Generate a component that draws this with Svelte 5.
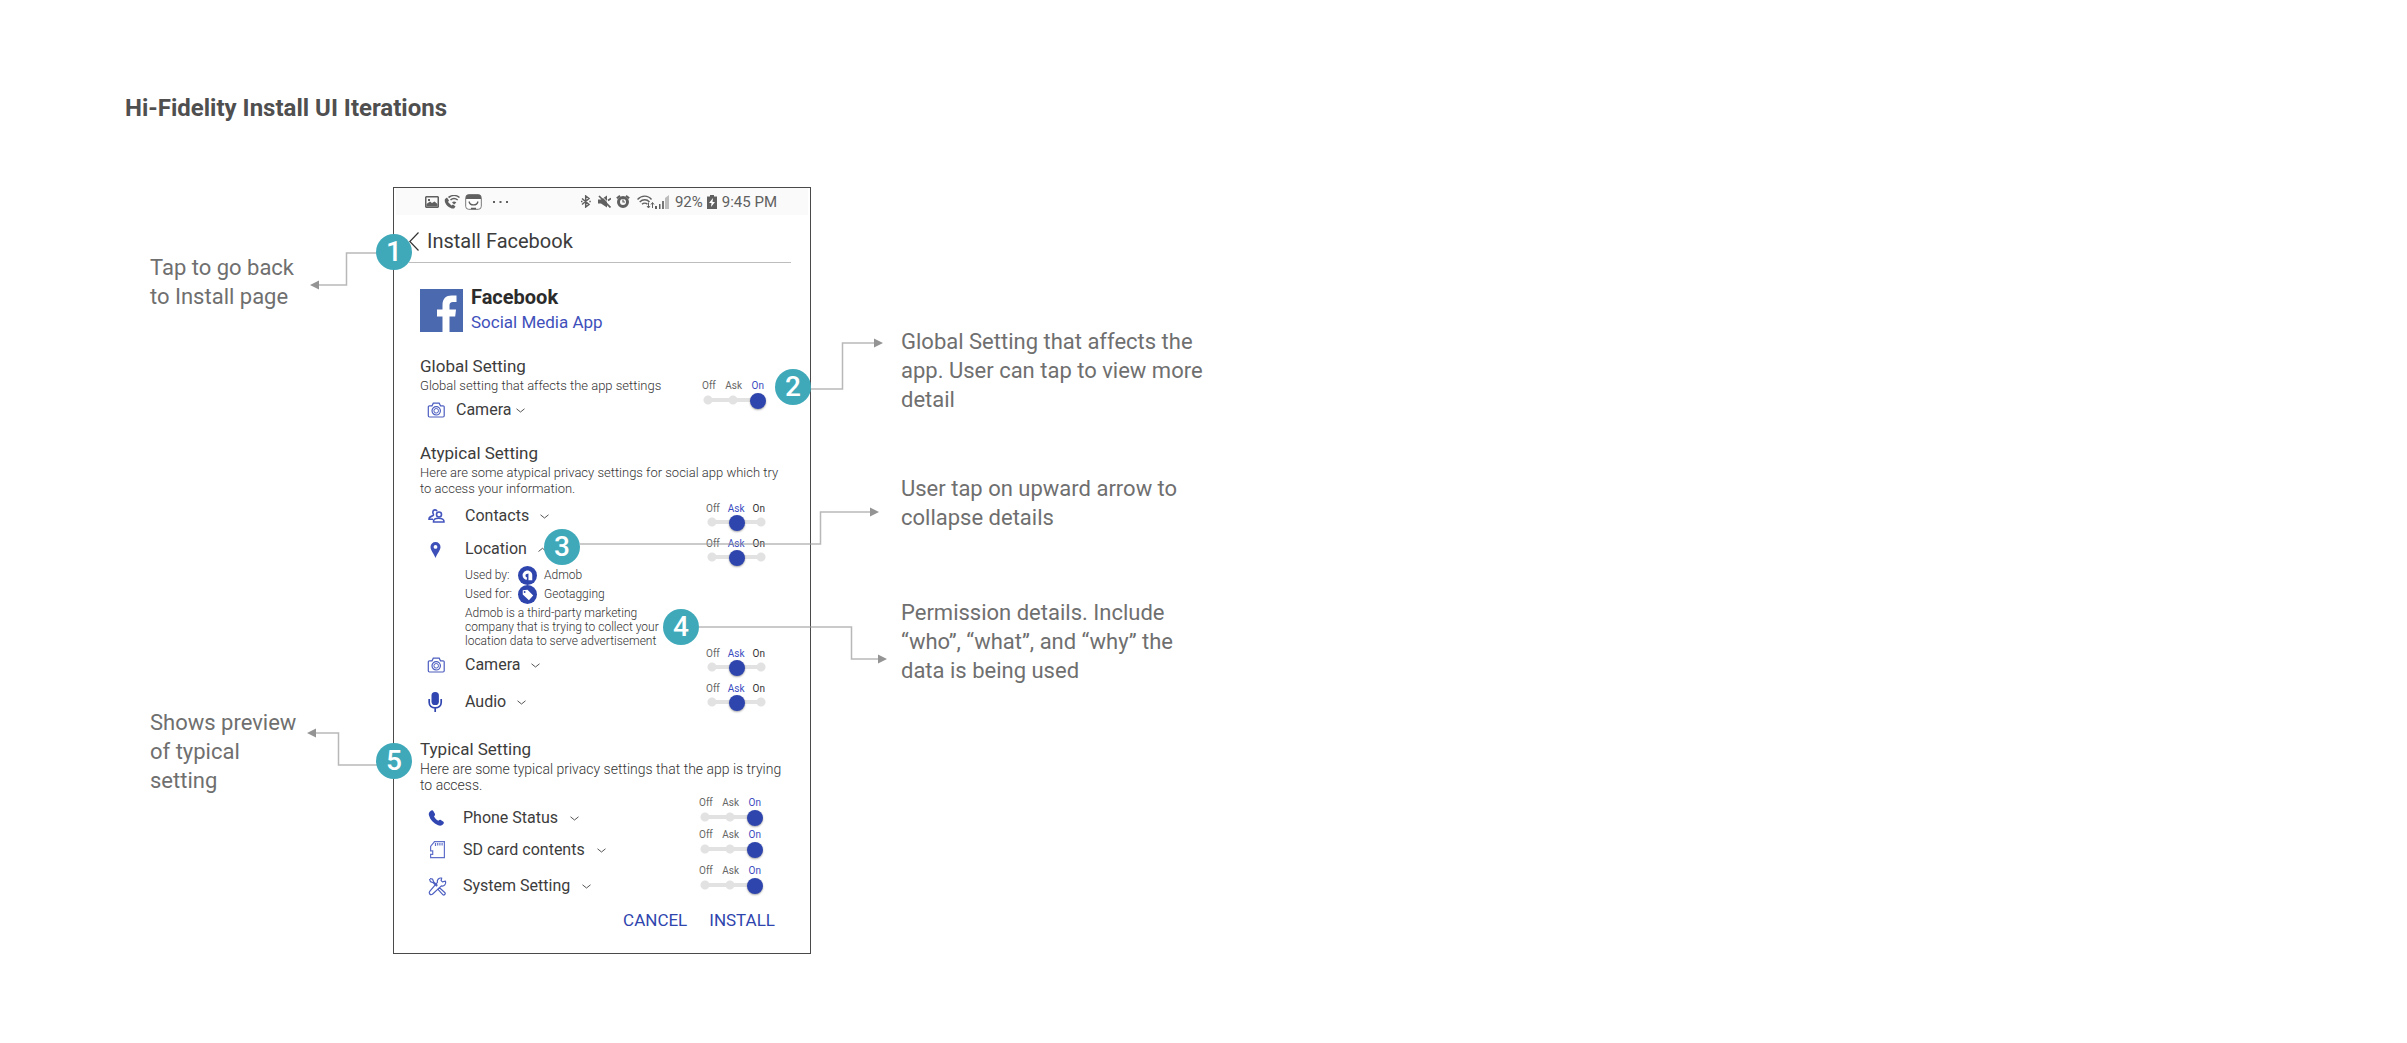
<script>
  let globalRow = { label: 'Camera', icon: 'camera' };
  let globalLevel = $state(2);

  const atypical = [
    { label: 'Contacts', icon: 'contacts' },
    { label: 'Location', icon: 'pin', open: true },
    { label: 'Camera', icon: 'camera' },
    { label: 'Audio', icon: 'mic' }
  ];
  let atypicalLevels = $state([1, 1, 1, 1]);

  const typical = [
    { label: 'Phone Status', icon: 'phone' },
    { label: 'SD card contents', icon: 'sd' },
    { label: 'System Setting', icon: 'tools' }
  ];
  let typicalLevels = $state([2, 2, 2]);

  const names = ['Off', 'Ask', 'On'];

  const leftNotes = ['Tap to go back\nto Install page', 'Shows preview\nof typical\nsetting'];
  const rightNotes = [
    'Global Setting that affects the\napp. User can tap to view more\ndetail',
    'User tap on upward arrow to\ncollapse details',
    'Permission details. Include\n“who”, “what”, and “why” the\ndata is being used'
  ];
</script>

{#snippet icon(name)}
  <svg class="icon" viewBox="0 0 20 20" aria-hidden="true">
    {#if name === 'camera'}
      <g fill="none" stroke="#4c5dc0" stroke-width="1.200">
        <path d="M2.500 5.800H5l1.300-2.600h5.900l1.300 2.600H16a1.200 1.200 0 0 1 1.200 1.200v8.800A1.200 1.200 0 0 1 16 17H2.500a1.200 1.200 0 0 1-1.200-1.200V7a1.200 1.200 0 0 1 1.200-1.200z" />
        <circle cx="9.200" cy="10.800" r="4.200" />
        <circle cx="9.200" cy="10.800" r="2.300" stroke-width="1" />
      </g>
    {:else if name === 'contacts'}
      <g fill="none" stroke="#4456be" stroke-width="1.600">
        <circle cx="12" cy="8.500" r="2.500" />
        <path d="M6.500 16c-.3-2.600 1.700-3.700 5-3.700s5.800 1.100 5.500 3.700z" />
        <path d="M10 5.200C9.300 3.300 6 3.300 5.800 6c0 1.600 1 2.200.6 3.200-.6 1.300-4.400.6-4.400 4h4" />
      </g>
    {:else if name === 'pin'}
      <path fill="#3d4fb8" fill-rule="evenodd" d="M8.500 3a5 5 0 0 0-5 5c0 3.600 3.500 6.500 5 11 1.500-4.500 5-7.400 5-11a5 5 0 0 0-5-5zm0 3a1.900 1.900 0 1 1 0 3.800 1.900 1.900 0 0 1 0-3.800z" />
    {:else if name === 'mic'}
      <rect x="4.500" y="0" width="7.400" height="13" rx="3.600" fill="#3146b0" />
      <path d="M2.200 7v3.500c0 3 2.400 5.300 6 5.300s6-2.300 6-5.300V7M8.200 15.500V20" fill="none" stroke="#3146b0" stroke-width="1.700" />
    {:else if name === 'phone'}
      <path fill="#3146b0" d="M3.500 3c1.300-1 2.400-.8 3.100.4l1.300 2.300c.5 1 .1 1.700-.9 2.500 1 2.100 2.400 3.500 4.300 4.500 1-1 1.700-1.300 2.500-.8l2.300 1.500c1 .8 1 1.700 0 2.800-1.200 1.400-2.800 1.900-5 1C6.500 15.400 3.300 12 2 7.500 1.400 5.600 2 4.200 3.500 3z" />
    {:else if name === 'sd'}
      <g fill="none" stroke="#6171ca" stroke-width="1.200">
        <path d="M7.500 1.600h9.900v16H3.600v-3.200h2.100v-3.500H3.600V6.500z" />
        <path d="M8.500 3v3M10.700 3v2.500M12.900 3v2.500M15.100 3v2.500" />
      </g>
    {:else}
      <g fill="none" stroke="#4e60c2" stroke-width="1.200" stroke-linejoin="round">
        <path d="M3 2.500l2.500.6 1.200 2.800 3.800 3.600M2.500 3l.9 2.600 2.800 1.200 3.600 3.600" />
        <path d="M12.500 11.800l5.500 5c.8 1-.9 2.800-2 2l-5-5.400z" />
        <path d="M17.800 5.200l-2.300.7-1.400-1.300.6-2.500c-2.600-.6-5 1.600-4.300 4.200L2.700 15.400c-1.400 2 .6 4 2.700 2.900l9-8.400c2.800.7 5-2 4.100-4.700z" />
      </g>
    {/if}
  </svg>
{/snippet}

{#snippet permission(row)}
  <button class="permission" aria-expanded={!!row.open}>
    {@render icon(row.icon)}
    <span>{row.label}</span>
    <svg class="chevron" viewBox="0 0 9 5" aria-hidden="true">
      <path d={row.open ? 'M.5 4.500l4-3.200 4 3.200' : 'M.5 .8l4 3.200 4-3.200'} />
    </svg>
  </button>
{/snippet}

{#snippet levelLabels(value)}
  <span class="levels" class:middle={value === 1} aria-hidden="true">
    {#each names as name, i}
      <span class:chosen={value === i}>{name}</span>
    {/each}
  </span>
{/snippet}

<main>
  <h1>Hi-Fidelity Install UI Iterations</h1>

  <div class="board">
    <div class="notes left">
      {#each leftNotes as note}<p>{note}</p>{/each}
    </div>

    <section class="phone">
      <div class="status">
        <svg class="st" width="14" height="12" viewBox="0 0 14 12"><path fill="#606060" fill-rule="evenodd" d="M1 0h12l1 1v10l-1 1H1l-1-1V1zM1.500 1.500v9h11v-9z" /><path fill="#606060" d="M1.500 10.500V8L5 5.500l2 1.500 2.500-1.500 3 2.500v2.500zM3 3h2v2H3z" /></svg>
        <svg class="st" width="16" height="14" viewBox="0 0 16 14"><path fill="#606060" d="M1 4l2-1.500 2 3L4 7l3.500 3.500L9 9.500l2.500 2L10 13.500C5 14-.5 8 1 4z" /><path fill="none" stroke="#606060" stroke-width="1.600" d="M4.500 2.500C8-.2 12.500 0 15.500 2.500M6.500 5c2-1.800 5-1.800 7.200 0" /><path fill="#606060" d="M8 7.500c1.200-1.200 3-1.200 4.300 0L10.200 9.500z" /></svg>
        <svg class="st" width="17" height="16" viewBox="0 0 17 16"><rect x=".7" y=".7" width="15.600" height="14.600" rx="3" fill="#fff" stroke="#777" /><path fill="#606060" d="M1 5V3a2.500 2.500 0 0 1 2.500-2.500h10A2.500 2.500 0 0 1 16 3v2z" /><path fill="none" stroke="#606060" stroke-width="1.300" d="M4 7.500c1 4.500 8 4.500 9 0M6 14.500h5" /></svg>
        <svg class="st dots" width="15" height="4" viewBox="0 0 15 4"><path fill="#606060" d="M0 1h2v2H0zM6.500 1h2v2h-2zM13 1h2v2h-2z" /></svg>
        <span class="fill"></span>
        <svg class="st bluetooth" width="10" height="13" viewBox="0 0 10 13"><path fill="none" stroke="#606060" stroke-width="1.500" d="M1 3.500l7 6L4.700 12V1L8 3.500l-7 6M0 6.500h1.500M8.300 6.500h1.500" /></svg>
        <svg class="st" width="13" height="13" viewBox="0 0 13 13"><path fill="#606060" d="M0 4.500h3l6-4v12l-6-4H0z" /><path stroke="#fafafa" d="M2.500 0L13 10.500" /><path stroke="#606060" stroke-width="1.700" d="M1 1l11.500 11.500M10 5.500l3-2" /></svg>
        <svg class="st" width="14" height="13" viewBox="0 0 14 13"><path stroke="#606060" stroke-width="2" d="M.8 3.200L4 .8M13.200 3.200L10 .8" /><circle cx="7" cy="7" r="4.500" fill="#fafafa" stroke="#606060" stroke-width="3" /><path fill="none" stroke="#606060" stroke-width="1.200" d="M7 4.500V7h2" /></svg>
        <svg class="st wifi" width="18" height="14" viewBox="0 0 18 14"><path fill="none" stroke="#606060" stroke-width="1.400" d="M.5 4.500c4-4.500 10.500-4.500 14 0M2.700 7c3-3 7.200-3 9.800 0M5 9.300c1.500-1.500 4-1.500 5.500 0" /><path stroke="#606060" d="M11.500 7.500v5M10 11l1.500 2 1.500-2M15.500 13V8M14 9.500l1.500-2 1.500 2" fill="none" /></svg>
        <svg class="st signal" width="15" height="14" viewBox="0 0 15 14"><path fill="#606060" d="M0 11h2v3H0zM4 9h1.500v5H4z" /><path fill="#777" d="M7 6h2v8H7z" /><path fill="#bdbdbd" d="M10 3l4-3v14h-4z" /></svg>
        <span class="pct">92%</span>
        <svg class="st" width="10" height="14" viewBox="0 0 10 14"><path fill="#606060" d="M3 0h4v1.500h3V14H0V1.500h3z" /><path fill="#fff" d="M6 3L2 8h2.500L4 12l4-5H5.500z" /></svg>
        <span class="time">9:45 PM</span>
      </div>

      <header>
        <button class="back" aria-label="Back">
          <svg viewBox="0 0 10 19"><path d="M9.500.5L.8 9.500l8.700 9" /></svg>
        </button>
        <h2>Install Facebook</h2>
      </header>

      <div class="app">
        <svg class="logo" viewBox="0 0 43 43" role="img" aria-label="Facebook logo">
          <rect width="43" height="43" fill="#4a69af" />
          <path fill="#fff" d="M22.500 43V27.500H17V20.500h5.500V16c0-6.500 3.500-9.500 9-9.500h5v6.500h-3.500c-2.600 0-3.500 1.200-3.500 3.500v4H36l-.8 7h-5.700V43z" />
        </svg>
        <div>
          <strong>Facebook</strong>
          <a href="#category">Social Media App</a>
        </div>
      </div>

      <section class="group global">
        <div>
          <h3>Global Setting</h3>
          <p class="desc">Global setting that affects the app settings</p>
          {@render permission(globalRow)}
        </div>
        <label class="slider">
          {@render levelLabels(globalLevel)}
          <input type="range" min="0" max="2" aria-label="Global setting level" bind:value={globalLevel} />
        </label>
      </section>

      <section class="group atypical">
        <h3>Atypical Setting</h3>
        <p class="desc">Here are some atypical privacy settings for social app which try to access your information.</p>
        <div class="controls">
          <div class="list">
            {#each atypical as row}
              {@render permission(row)}
              {#if row.open}
                <div class="details">
                  <div class="use">
                    <span>Used by:</span>
                    <svg viewBox="0 0 20 20" aria-hidden="true"><circle cx="10" cy="10" r="10" fill="#2f45ae" /><path fill="#fff" d="M15 15V9.500C15 7 12.700 4.700 10 4.700S4.800 7 4.800 9.800c0 2.400 1.800 4.500 4.200 4.900l.6-2.600c-1.200-.4-1.700-1.200-1.700-2.200 0-.5.2-1 .5-1.300L11 7.800V15z" /></svg>
                    <span>Admob</span>
                  </div>
                  <div class="use">
                    <span>Used for:</span>
                    <svg viewBox="0 0 20 20" aria-hidden="true"><circle cx="10" cy="10" r="10" fill="#2f45ae" /><path fill="#fff" fill-rule="evenodd" d="M5 5.500L10 5l6 6-4.500 5L5 10zm2 .8a1 1 0 1 0 0 2 1 1 0 0 0 0-2z" /></svg>
                    <span>Geotagging</span>
                  </div>
                  <p>Admob is a third-party marketing company that is trying to collect your location data to serve advertisement</p>
                </div>
              {/if}
            {/each}
          </div>
          <div class="sliders">
            {#each atypical as row, i}
              <label class="slider">
                {@render levelLabels(atypicalLevels[i])}
                <input type="range" min="0" max="2" aria-label={row.label} bind:value={atypicalLevels[i]} />
              </label>
            {/each}
          </div>
        </div>
      </section>

      <section class="group typical">
        <h3>Typical Setting</h3>
        <p class="desc">Here are some typical privacy settings that the app is trying to access.</p>
        <div class="controls">
          <div class="list">
            {#each typical as row}{@render permission(row)}{/each}
          </div>
          <div class="sliders">
            {#each typical as row, i}
              <label class="slider">
                {@render levelLabels(typicalLevels[i])}
                <input type="range" min="0" max="2" aria-label={row.label} bind:value={typicalLevels[i]} />
              </label>
            {/each}
          </div>
        </div>
      </section>

      <footer>
        <button>CANCEL</button>
        <button>INSTALL</button>
      </footer>
    </section>

    <div class="notes right">
      {#each rightNotes as note}<p>{note}</p>{/each}
    </div>

    <svg class="wires" viewBox="0 0 900 767" aria-hidden="true">
      <g class="lines">
        <path d="M376 66H346.500V98H318" />
        <path d="M811 202H842.500V156H875" />
        <path d="M580 357H820.500V325H871" />
        <path d="M699 440H851.500V472H879" />
        <path d="M378 578H338.500V546H315" />
      </g>
      <path class="tips" d="M310 98l9-4.500v9zM883 156l-9-4.500v9zM879 325l-9-4.500v9zM887 472l-9-4.500v9zM307 546l9-4.500v9z" />
    </svg>
    <span class="badge one">1</span>
    <span class="badge two">2</span>
    <span class="badge three">3</span>
    <span class="badge four">4</span>
    <span class="badge five">5</span>
  </div>
</main>

<style>
  :global(body) {
    background: #fff;
    font-family: Roboto, 'Liberation Sans', sans-serif;
  }
  h1, h2, h3, p { margin: 0; }
  button {
    border: 0;
    padding: 0;
    background: none;
    font: inherit;
    color: inherit;
    cursor: pointer;
  }
  main { padding: 94px 0 89px; }
  h1 {
    padding-left: 125px;
    font-size: 24px;
    line-height: 28px;
    color: #4f4f4f;
  }
  .board {
    position: relative;
    display: grid;
    grid-template-columns: 393px 418px minmax(0, 1fr);
    margin-top: 65px;
  }
  .notes {
    display: flex;
    flex-direction: column;
    font-size: 22px;
    line-height: 29px;
    color: #6f6f6f;
  }
  .notes p { white-space: pre; }
  .left { padding: 66px 0 0 150px; gap: 397px; }
  .right { padding: 140px 0 0 90px; gap: 60px; }
  .right p:last-child { margin-top: 6px; }

  .phone {
    border: 1px solid #4a4a4a;
    color: #3c3c3c;
    font-size: 16px;
    line-height: 20px;
  }
  .status {
    display: flex;
    align-items: center;
    gap: 5px;
    height: 27px;
    margin: 0 2px;
    padding: 0 31px 0 29px;
    background: #fafafa;
    color: #606060;
    font-size: 15px;
  }
  .st { flex: none; }
  .dots { margin-left: 6px; }
  .bluetooth { margin-right: 2px; }
  .wifi { margin-left: 2px; }
  .signal { margin-left: -5px; }
  .pct { margin-right: -1px; }
  .fill { flex: 1; }
  header {
    display: flex;
    align-items: center;
    gap: 8px;
    margin: 0 19px 0 15px;
    padding: 14px 0 9px;
    border-bottom: 1px solid #bdbdbd;
  }
  .back { width: 10px; height: 24px; }
  .back svg { display: block; width: 10px; height: 19px; margin: auto; }
  .back path { fill: none; stroke: #333; stroke-width: 1.2; }
  h2 { font-size: 20px; line-height: 24px; font-weight: 400; }

  .app {
    display: flex;
    align-items: center;
    gap: 8px;
    margin: 22px 0 0 26px;
  }
  .logo { width: 43px; height: 43px; }
  .app div { display: flex; flex-direction: column; line-height: 25px; }
  .app strong { font-size: 20px; color: #2b2b2b; }
  .app a { font-size: 17px; color: #4050bb; text-decoration: none; }

  .group { padding-left: 26px; }
  h3 { font-size: 17px; line-height: 20px; font-weight: 400; }
  .desc {
    max-width: 370px;
    margin-top: 2px;
    font-size: 13px;
    line-height: 16px;
    font-weight: 300;
    color: #333;
  }
  .global {
    display: flex;
    justify-content: space-between;
    margin-top: 21px;
    padding-right: 44px;
  }
  .global .permission { margin-top: 6px; gap: 5px; }
  .global .icon { margin-right: 4px; }
  .global .slider { margin-top: 23px; }

  .permission {
    display: flex;
    align-items: center;
    gap: 12px;
    padding-left: 7px;
    line-height: 20px;
  }
  .icon { width: 20px; height: 20px; }
  .chevron { width: 9px; height: 5px; }
  .chevron path { fill: none; stroke: #555; }

  .controls { display: flex; justify-content: space-between; }
  .list, .sliders { display: flex; flex-direction: column; align-items: flex-start; }
  .atypical { margin-top: 23px; }
  .atypical .controls { padding-right: 40px; }
  .atypical .list { margin-top: 9px; gap: 13px; }
  .atypical .icon { margin-right: 6px; }
  .atypical .permission { gap: 11px; }
  .atypical .icon { margin-right: 7px; }
  .atypical .permission:last-child { margin-top: 4px; }
  .atypical .sliders { margin-top: 5px; gap: 6px; }
  .atypical .slider:nth-child(3) { margin-top: 75px; }

  .details {
    width: 200px;
    margin: -6px 0 -7px 45px;
    font-size: 12px;
    line-height: 14px;
    font-weight: 300;
    color: #333;
  }
  .use {
    display: grid;
    grid-template-columns: 46px 19px auto;
    align-items: center;
    column-gap: 7px;
    line-height: 19px;
    white-space: nowrap;
  }
  .use svg { width: 19px; height: 19px; }
  .details p { margin-top: 2px; }
  .details { padding-bottom: 1px; }

  .slider { display: block; width: 66px; }
  .levels {
    display: flex;
    justify-content: space-between;
    padding: 0 2px;
    font-size: 10px;
    line-height: 14px;
    color: #666;
  }
  .levels.middle { padding: 0 5px 0 2px; line-height: 13px; }
  .middle span:last-child { color: #333; }
  .levels .chosen { color: #3a4cc0; }
  input {
    appearance: none;
    display: block;
    width: 66px;
    height: 16px;
    margin: 0;
    background:
      radial-gradient(circle at 8px 7px, #e2e2e2 4px, transparent 5px),
      radial-gradient(circle at 33px 7px, #e2e2e2 4px, transparent 5px),
      radial-gradient(circle at 57px 7px, #e2e2e2 4px, transparent 5px),
      linear-gradient(#e2e2e2, #e2e2e2) 8px 5px / 50px 4px no-repeat;
    cursor: pointer;
  }
  input::-webkit-slider-thumb {
    appearance: none;
    width: 16px;
    height: 16px;
    border-radius: 50%;
    background: #2f45ae;
    box-shadow: 0 1px 2px rgba(0, 0, 0, 0.35);
  }

  .typical { margin-top: 27px; }
  .typical .desc { font-size: 14px; }
  .typical .controls { padding-right: 47px; }
  .typical .list { margin-top: 15px; gap: 12px; }
  .typical .icon { margin-right: 4px; }
  .typical .sliders { margin-top: 3px; gap: 2px; }
  .typical .permission:last-child, .typical .slider:last-child { margin-top: 4px; }

  footer {
    display: flex;
    justify-content: flex-end;
    gap: 22px;
    padding: 14px 35px 23px 0;
    font-size: 17px;
    color: #2f45ae;
  }

  .wires {
    position: absolute;
    left: 0;
    top: 0;
    width: 900px;
    height: 767px;
    pointer-events: none;
  }
  .lines { fill: none; stroke: #9a9a9a; stroke-opacity: 0.7; stroke-width: 1.5; }
  .tips { fill: #949494; }

  .badge {
    position: absolute;
    width: 36px;
    height: 36px;
    border-radius: 50%;
    background: #3fa9b9;
    color: #fff;
    font-size: 28px;
    font-weight: 500;
    line-height: 36px;
    text-align: center;
  }
  .one { left: 376px; top: 47px; }
  .two { left: 775px; top: 182px; }
  .three { left: 544px; top: 342px; }
  .four { left: 663px; top: 422px; }
  .five { left: 376px; top: 556px; }
</style>
